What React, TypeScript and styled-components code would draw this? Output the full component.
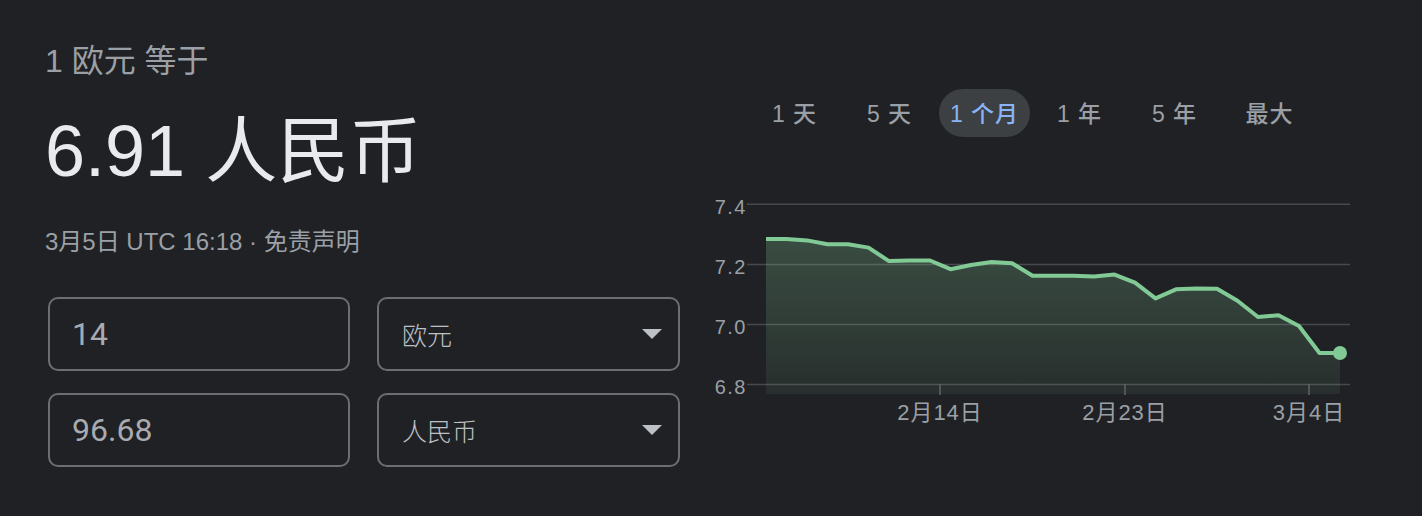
import styled, { createGlobalStyle } from 'styled-components';

const GlobalStyle = createGlobalStyle`
  html, body {
    margin: 0;
    padding: 0;
    background: #202124;
  }
  body {
    font-family: 'Liberation Sans', 'Noto Sans CJK SC', sans-serif;
    color: #9aa0a6;
  }
`;

const RANGES = ['1 天', '5 天', '1 个月', '1 年', '5 年', '最大'];
const ACTIVE = 2;

// 每日汇率 (EUR -> CNY)
const RATES = [
  7.285, 7.285, 7.28, 7.267, 7.267, 7.256, 7.211, 7.213, 7.213, 7.184, 7.198, 7.208, 7.204, 7.162, 7.162,
  7.162, 7.16, 7.166, 7.139, 7.087, 7.117, 7.12, 7.119, 7.079, 7.025, 7.031, 6.995, 6.905, 6.905,
];

const GRID = [7.4, 7.2, 7.0, 6.8];
const X_LABELS = [
  { x: 940, text: '2月14日' },
  { x: 1125, text: '2月23日' },
  { x: 1309, text: '3月4日' },
];

const yOf = (v: number) => 204.3 + (7.4 - v) * 300.5;
const xOf = (i: number) => 766 + i * 20.5;

const App = () => {
  const pts = RATES.map((v, i) => `${xOf(i)},${yOf(v).toFixed(1)}`);
  const linePath = 'M' + pts.join(' L');
  const lastX = xOf(RATES.length - 1);
  const areaPath = `${linePath} L${lastX},394 L${xOf(0)},394 Z`;
  const last = RATES[RATES.length - 1];

  return (
    <>
      <GlobalStyle />
      <Page>
        <Summary>
          <Caption>1 欧元 等于</Caption>
          <Result>6.91 人民币</Result>
          <Stamp>3月5日 UTC 16:18 · 免责声明</Stamp>
          <Converter>
            <Field>
              <Amount>14</Amount>
            </Field>
            <Field>
              <Currency>欧元</Currency>
              <Caret />
            </Field>
            <Field>
              <Amount>96.68</Amount>
            </Field>
            <Field>
              <Currency>人民币</Currency>
              <Caret />
            </Field>
          </Converter>
        </Summary>

        <ChartPanel>
          <Tabs>
            {RANGES.map((r, i) => (
              <TabSlot key={r}>
                <Tab $active={i === ACTIVE}>{r}</Tab>
              </TabSlot>
            ))}
          </Tabs>
          <Chart viewBox="700 185 660 250" width={660} height={250}>
            <defs>
              <linearGradient id="area" x1="0" y1="0" x2="0" y2="1">
                <stop offset="0%" stopColor="#81c995" stopOpacity="0.26" />
                <stop offset="100%" stopColor="#81c995" stopOpacity="0.08" />
              </linearGradient>
            </defs>
            {GRID.map((g) => (
              <g key={g}>
                <line x1={747} x2={1350} y1={yOf(g)} y2={yOf(g)} stroke="#46494d" strokeWidth={1.5} />
                <text className="y" x={747} y={yOf(g) + 9.5} textAnchor="end">
                  {g.toFixed(1)}
                </text>
              </g>
            ))}
            <path d={areaPath} fill="url(#area)" />
            <path d={linePath} fill="none" stroke="#81c995" strokeWidth={4} strokeLinejoin="round" />
            <circle cx={lastX} cy={yOf(last)} r={7} fill="#81c995" />
            {X_LABELS.map((l) => (
              <g key={l.text}>
                <line x1={l.x} x2={l.x} y1={384} y2={395} stroke="#5f6368" strokeWidth={1.5} />
                <text className="x" x={l.x} y={420} textAnchor="middle">
                  {l.text}
                </text>
              </g>
            ))}
          </Chart>
        </ChartPanel>
      </Page>
    </>
  );
};

const Page = styled.div`
  display: flex;
  width: 1422px;
  height: 516px;
  padding-left: 45px;
  box-sizing: border-box;
  gap: 20px;
`;

const Summary = styled.div`
  width: 635px;
  padding-top: 42px;
  display: flex;
  flex-direction: column;
`;

const Caption = styled.div`
  font-size: 32px;
  line-height: 38px;
  color: #9aa0a6;
`;

const Result = styled.div`
  margin-top: 28px;
  font-size: 72px;
  line-height: 86px;
  color: #e8eaed;
`;

const Stamp = styled.div`
  margin-top: 33px;
  font-size: 24px;
  line-height: 30px;
  color: #9aa0a6;
`;

const Converter = styled.div`
  margin-top: 40px;
  padding-left: 3px;
  display: grid;
  grid-template-columns: 302px 303px;
  column-gap: 27px;
  row-gap: 22px;
`;

const Field = styled.div`
  height: 74px;
  box-sizing: border-box;
  border: 2px solid #6b6e72;
  border-radius: 10px;
  display: flex;
  align-items: center;
  justify-content: space-between;
  padding: 0 16px 0 22px;
`;

const Amount = styled.span`
  font-family: Roboto, 'Liberation Sans', sans-serif;
  font-size: 32px;
  color: #a8abb0;
`;

const Currency = styled.span`
  font-family: 'Noto Sans CJK SC', sans-serif;
  font-size: 25px;
  font-weight: 300;
  color: #bdc1c6;
  margin-left: 1px;
`;

const Caret = styled.span`
  width: 0;
  height: 0;
  border-left: 10px solid transparent;
  border-right: 10px solid transparent;
  border-top: 10px solid #bdc1c6;
`;

const ChartPanel = styled.div`
  width: 660px;
  padding-top: 89px;
  display: flex;
  flex-direction: column;
`;

const Tabs = styled.div`
  display: flex;
  padding-left: 47px;
`;

const TabSlot = styled.div`
  width: 95px;
  display: flex;
  justify-content: center;
`;

const Tab = styled.div<{ $active?: boolean }>`
  height: 48px;
  padding: 0 11px;
  border-radius: 24px;
  display: flex;
  align-items: center;
  padding-bottom: 2px;
  box-sizing: border-box;
  font-size: 23px;
  font-weight: 500;
  letter-spacing: 1px;
  white-space: nowrap;
  color: ${(p) => (p.$active ? '#8ab4f8' : '#9aa0a6')};
  background: ${(p) => (p.$active ? '#3c4043' : 'transparent')};
`;

const Chart = styled.svg`
  display: block;
  margin-top: 48px;

  text {
    font-family: 'Liberation Sans', 'Noto Sans CJK SC', sans-serif;
    fill: #9aa0a6;
  }
  text.y {
    font-size: 20px;
    letter-spacing: 1.5px;
  }
  text.x {
    font-size: 22px;
    letter-spacing: 1px;
  }
`;

export default App;
